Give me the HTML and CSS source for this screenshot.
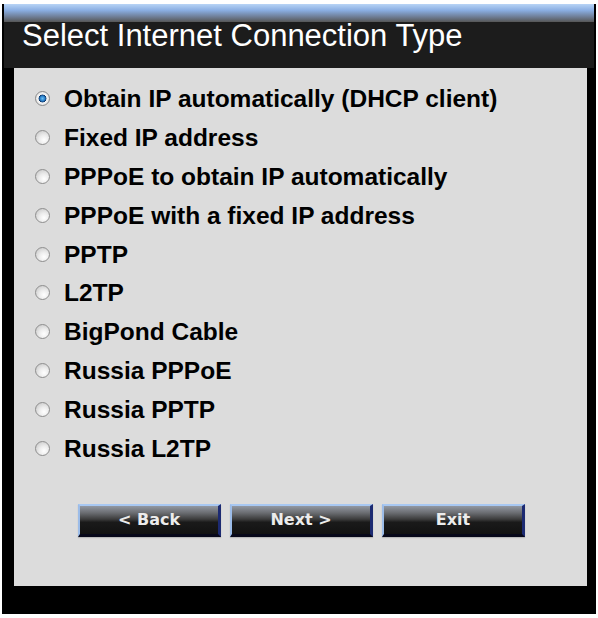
FILE: index.html
```html
<!DOCTYPE html>
<html>
<head>
<meta charset="utf-8">
<link rel="stylesheet" href="styles.css">
</head>
<body>
<div class="frame">
  <div class="topbar"></div>
  <div class="title">Select Internet Connection Type</div>
  <div class="panel">
    <ul class="options">
      <li class="option"><span class="radio checked"></span><span class="label">Obtain IP automatically (DHCP client)</span></li>
      <li class="option"><span class="radio"></span><span class="label">Fixed IP address</span></li>
      <li class="option"><span class="radio"></span><span class="label">PPPoE to obtain IP automatically</span></li>
      <li class="option"><span class="radio"></span><span class="label">PPPoE with a fixed IP address</span></li>
      <li class="option"><span class="radio"></span><span class="label">PPTP</span></li>
      <li class="option"><span class="radio"></span><span class="label">L2TP</span></li>
      <li class="option"><span class="radio"></span><span class="label">BigPond Cable</span></li>
      <li class="option"><span class="radio"></span><span class="label">Russia PPPoE</span></li>
      <li class="option"><span class="radio"></span><span class="label">Russia PPTP</span></li>
      <li class="option"><span class="radio"></span><span class="label">Russia L2TP</span></li>
    </ul>
    <div class="buttons">
      <button class="btn">&lt; Back</button>
      <button class="btn">Next &gt;</button>
      <button class="btn">Exit</button>
    </div>
  </div>
</div>
</body>
</html>
```
FILE: styles.css
```css
html, body {
  margin: 0;
  padding: 0;
  background: #ffffff;
}

.frame {
  box-sizing: border-box;
  width: 594px;
  height: 610px;
  margin: 4px 2px 0 2px;
  padding: 0 2px;
  background: #000000;
}

.topbar {
  height: 18px;
  background: linear-gradient(#b8d4f6 0%, #8aaee2 35%, #6f7f98 70%, #565656 100%);
}

.title {
  box-sizing: border-box;
  height: 46px;
  padding: 0 0 0 18px;
  background: #1c1c1c;
  color: #ffffff;
  font-family: "Liberation Sans", Arial, sans-serif;
  font-size: 31px;
  line-height: 28px;
  white-space: nowrap;
}

.panel {
  box-sizing: border-box;
  height: 518px;
  margin: 0 7px 0 10px;
  padding-top: 11px;
  background: #dcdcdc;
}

.options {
  list-style: none;
  margin: 0;
  padding: 0 0 0 21px;
}

.option {
  display: flex;
  align-items: center;
  height: 38.9px;
}

.radio {
  box-sizing: border-box;
  flex: none;
  width: 15px;
  height: 15px;
  margin-right: 14px;
  border-radius: 50%;
  border: 1px solid #8e8e8e;
  background: radial-gradient(circle at 62% 68%, #ffffff 0%, #ececec 40%, #cfcfcf 80%, #bdbdbd 100%);
}

.radio.checked {
  border-color: #8a8a8a;
  background: radial-gradient(circle at 50% 50%, #6cc0f2 0%, #2c82cc 25%, #17508e 36%, #0e3462 40%, #f6f6f6 46%, #e4e4e4 72%, #c2c2c2 100%);
}

.label {
  font-family: "Liberation Sans", Arial, sans-serif;
  font-weight: bold;
  font-size: 24.5px;
  line-height: 39px;
  color: #000000;
  white-space: nowrap;
}

.buttons {
  display: flex;
  justify-content: center;
  gap: 9px;
  margin-top: 36px;
  padding-left: 2px;
}

.btn {
  box-sizing: border-box;
  width: 143px;
  height: 33px;
  padding: 0;
  border-style: solid;
  border-width: 2px 3px 3px 2px;
  border-color: #a8c8f2 #1c2a72 #07081a #9cbce8;
  background: linear-gradient(#9298a2 0%, #6a6c70 25%, #3a3a3a 48%, #1a1a1a 58%, #121212 100%);
  color: #ececec;
  font-family: "DejaVu Sans", Verdana, sans-serif;
  font-weight: bold;
  font-size: 16px;
  line-height: 26px;
  box-shadow: 0 1px 1px rgba(0, 0, 0, 0.15);
}
```
